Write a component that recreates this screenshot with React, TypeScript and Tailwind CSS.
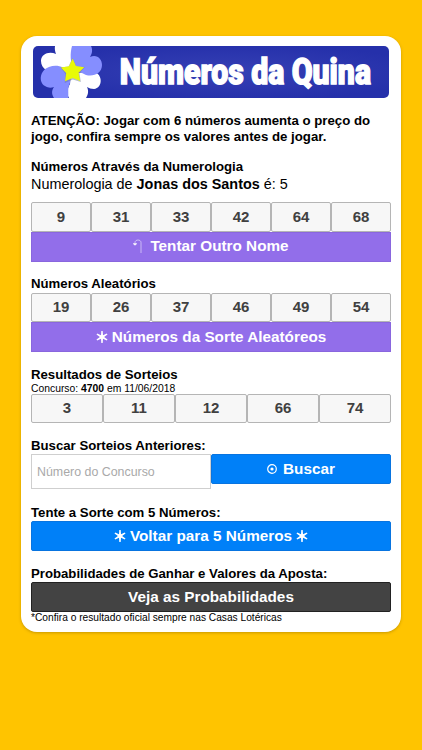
import React from 'react';

const Star = () => (
  <svg viewBox="0 0 12 12" className="w-3 h-3 shrink-0" fill="currentColor">
    <path d="M5.3 0H6.7L7 4.2L10.8 2.4L11.5 3.6L8.1 6L11.5 8.4L10.8 9.6L7 7.8L6.7 12H5.3L5 7.8L1.2 9.6L.5 8.4L3.9 6L.5 3.6L1.2 2.4L5 4.2Z" />
  </svg>
);

const Hook = () => (
  <svg viewBox="0 0 9 15" className="w-[9px] h-[15px] shrink-0" fill="none" stroke="currentColor" strokeWidth=".7">
    <path d="M2 5V3.5C2 .2 8 .2 8 3.5V14" opacity=".75" />
    <path d="M.3 4.7H3.7L2 6.2Z" fill="currentColor" />
  </svg>
);

const Target = () => (
  <svg viewBox="0 0 10 10" className="w-2.5 h-2.5 shrink-0" fill="none" stroke="currentColor" strokeWidth="1.2">
    <circle cx="5" cy="5" r="4.3" />
    <circle cx="5" cy="5" r="1.6" fill="currentColor" stroke="none" />
  </svg>
);

const Banner = () => (
  <svg viewBox="0 0 356 52" className="block w-[356px] h-[52px] mx-auto rounded-[5px]">
    <defs>
      <radialGradient id="glow" cx=".55" cy=".5" r=".55">
        <stop offset="0" stopColor="#3640b5" />
        <stop offset="1" stopColor="#2530aa" />
      </radialGradient>
    </defs>
    <rect width="356" height="52" fill="url(#glow)" />
    <path fill="#fff" d="M22 0C21.5 3 22 5 23 8C16 5 8 8 8 15C8 19 10 22 13 24L39 30V0Z" />
    <path fill="#fff" d="M38 27L61 26C70 28 70 42 61 43C58 43 56 42 54 41C56 45 55 49 53 52H36C33 47 35 41 37 38Z" />
    <path fill="#858eff" d="M39 0H58C60 4 59 8 57 11C64 8 69 13 69 19C69 27 61 31 53 29L41 23C37 17 37 7 39 0Z" />
    <path fill="#858eff" d="M37 27C31 20 23 18 16 21C7 24 5 36 12 40C15 42 18 42 21 41C18 45 19 49 21 52H35C36 48 34 42 37 37Z" />
    <path d="M39.5 12L43.4 20.5L52 21L46.5 27.2L47.8 36L39.8 33.5L31.7 37L32.5 28L27.5 21.5L35.5 20.5Z" fill="#6874a8" opacity=".5" />
    <path d="M39.6 12.5L43 20L51.3 21.2L45.5 26.8L47.2 35L39.7 32L32 35.2L33.2 27L27.8 21.4L36 20.2Z" fill="#e8fa08" />
    <text
      x="0"
      y="0"
      transform="translate(86.8 38.3) scale(.84 1)"
      textLength="299"
      fill="#fff"
      stroke="#fff"
      strokeWidth="1.4"
      textRendering="geometricPrecision"
      className="font-['Roboto',sans-serif] text-[36px] font-black"
    >
      Números da Quina
    </text>
  </svg>
);

const NumberRow: React.FC<{ numbers: number[] }> = ({ numbers }) => (
  <div className="flex h-[29.5px]">
    {numbers.map((n) => (
      <div
        key={n}
        className="flex-1 flex items-center justify-center border border-[#b5b5b5] rounded-[2px] bg-[#f7f7f7] text-[15px] font-bold text-[#404040]"
      >
        {n}
      </div>
    ))}
  </div>
);

const Heading: React.FC<{ children: React.ReactNode }> = ({ children }) => (
  <h2 className="h-[16.5px] leading-[16.5px] text-[13.2px] font-bold whitespace-nowrap">{children}</h2>
);

const Button: React.FC<{ className: string; children: React.ReactNode }> = ({ className, children }) => (
  <button className={`flex w-full h-[30px] items-center justify-center border text-[15.3px] font-bold text-white whitespace-nowrap ${className}`}>
    {children}
  </button>
);

const purple = 'gap-1 bg-[#926eea] border-[#8966de]';
const blue = 'gap-1 bg-[#0080f8] border-[#0874e0] rounded-[2px]';

const App: React.FC = () => {
  return (
    <div className="min-h-screen bg-[#ffc400] pt-9 pl-[21px] font-['Liberation_Sans',Arial,sans-serif] text-black">
      <main className="w-[380px] h-[596px] rounded-[16px] bg-white px-2.5 pt-2.5 shadow-[0_1px_3px_rgba(120,90,0,0.4)]">
        <Banner />
        <p className="mt-[15px] text-[13.23px] leading-[15.5px] font-bold whitespace-nowrap">
          ATENÇÃO: Jogar com 6 números aumenta o preço do
          <br />
          jogo, confira sempre os valores antes de jogar.
        </p>

        <section className="mt-[15px]">
          <Heading>Números Através da Numerologia</Heading>
          <p className="h-[17px] leading-[17px] mb-[9.5px] text-[14.4px] whitespace-nowrap">
            Numerologia de <b>Jonas dos Santos</b> é: 5
          </p>
          <NumberRow numbers={[9, 31, 33, 42, 64, 68]} />
          <Button className={purple}>
            <Hook />
            <span className="ml-1">Tentar Outro Nome</span>
          </Button>
        </section>

        <section className="mt-[14.5px]">
          <Heading>Números Aleatórios</Heading>
          <NumberRow numbers={[19, 26, 37, 46, 49, 54]} />
          <Button className={purple}><Star /> Números da Sorte Aleatóreos</Button>
        </section>

        <section className="mt-[14.5px]">
          <Heading>Resultados de Sorteios</Heading>
          <p className="h-[10.5px] leading-[11px] text-[10.35px] whitespace-nowrap">
            Concurso: <b>4700</b> em 11/06/2018
          </p>
          <NumberRow numbers={[3, 11, 12, 66, 74]} />
        </section>

        <section className="mt-[14.5px]">
          <Heading>Buscar Sorteios Anteriores:</Heading>
          <div className="flex items-start">
            <input
              className="w-[180px] h-[35px] border border-[#cfcfcf] px-[5px] text-[12.4px] placeholder:text-[#a9a9a9]"
              placeholder="Número do Concurso"
            />
            <div className="flex-1">
              <Button className={blue}>
                <Target />
                <span className="ml-0.5">Buscar</span>
              </Button>
            </div>
          </div>
        </section>

        <section className="mt-[15.5px]">
          <Heading>Tente a Sorte com 5 Números:</Heading>
          <Button className={blue}><Star /> Voltar para 5 Números <Star /></Button>
        </section>

        <section className="mt-[14.5px]">
          <Heading>Probabilidades de Ganhar e Valores da Aposta:</Heading>
          <Button className="bg-[#434343] border-[#222] rounded-[2px]">Veja as Probabilidades</Button>
          <p className="h-[11px] leading-[11px] text-[10.2px] whitespace-nowrap">
            *Confira o resultado oficial sempre nas Casas Lotéricas
          </p>
        </section>
      </main>
    </div>
  );
};

export default App;
